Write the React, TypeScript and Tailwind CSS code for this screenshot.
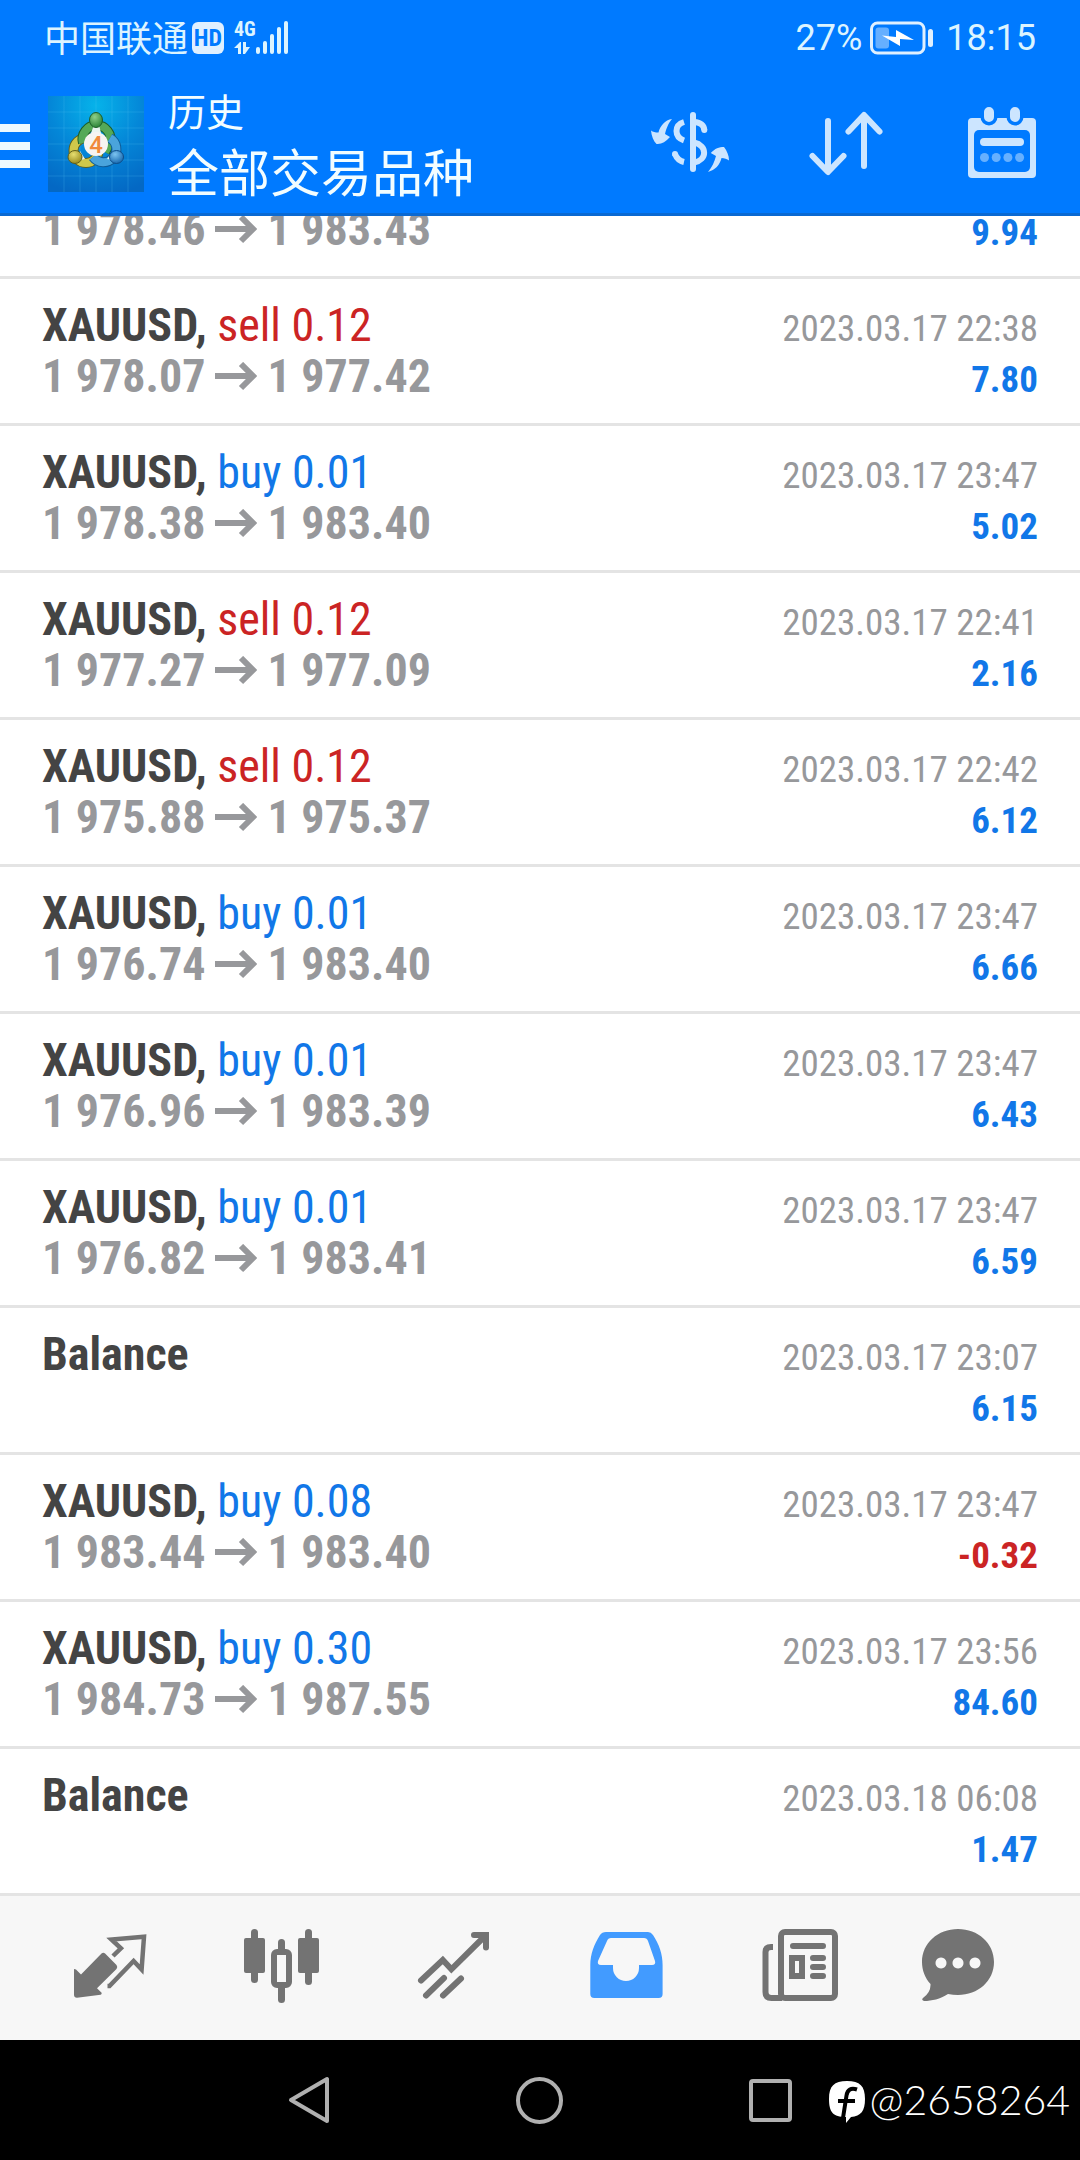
import type { ReactNode } from "react";

type Side = "buy" | "sell";

interface Deal {
  symbol?: string;
  side?: Side;
  volume?: string;
  open?: string;
  close?: string;
  time?: string;
  profit: string;
}

const DEALS: Deal[] = [
  // scrolled under the header, only its price line is left
  { open: "1 978.46", close: "1 983.43", profit: "9.94" },
  { symbol: "XAUUSD", side: "sell", volume: "0.12", open: "1 978.07", close: "1 977.42", time: "2023.03.17 22:38", profit: "7.80" },
  { symbol: "XAUUSD", side: "buy", volume: "0.01", open: "1 978.38", close: "1 983.40", time: "2023.03.17 23:47", profit: "5.02" },
  { symbol: "XAUUSD", side: "sell", volume: "0.12", open: "1 977.27", close: "1 977.09", time: "2023.03.17 22:41", profit: "2.16" },
  { symbol: "XAUUSD", side: "sell", volume: "0.12", open: "1 975.88", close: "1 975.37", time: "2023.03.17 22:42", profit: "6.12" },
  { symbol: "XAUUSD", side: "buy", volume: "0.01", open: "1 976.74", close: "1 983.40", time: "2023.03.17 23:47", profit: "6.66" },
  { symbol: "XAUUSD", side: "buy", volume: "0.01", open: "1 976.96", close: "1 983.39", time: "2023.03.17 23:47", profit: "6.43" },
  { symbol: "XAUUSD", side: "buy", volume: "0.01", open: "1 976.82", close: "1 983.41", time: "2023.03.17 23:47", profit: "6.59" },
  { symbol: "Balance", time: "2023.03.17 23:07", profit: "6.15" },
  { symbol: "XAUUSD", side: "buy", volume: "0.08", open: "1 983.44", close: "1 983.40", time: "2023.03.17 23:47", profit: "-0.32" },
  { symbol: "XAUUSD", side: "buy", volume: "0.30", open: "1 984.73", close: "1 987.55", time: "2023.03.17 23:56", profit: "84.60" },
  { symbol: "Balance", time: "2023.03.18 06:08", profit: "1.47" },
];

function StatusBar() {
  return (
    <div className="flex h-[71px] items-center justify-between px-11 pt-1 text-[36px] leading-[50px] text-[#dcf4ff]">
      <div className="flex items-center">
        <span className="pb-1 font-['Noto_Sans_CJK_SC',sans-serif]">中国联通</span>
        <span className="ml-1 flex size-8 items-center justify-center rounded-md bg-[#e0f0ff] font-['Roboto_Condensed','Roboto',sans-serif] text-[24px] font-bold text-[#007aff]">
          HD
        </span>
        <div className="ml-2.5 flex h-[33px] items-end">
          <div className="flex h-full flex-col justify-between">
            <span className="font-['Roboto_Condensed','Roboto',sans-serif] text-[20px] font-bold leading-4">4G</span>
            <svg viewBox="0 0 17 12" className="h-3 w-[17px]" fill="currentColor">
              <path d="M0 6 6 0h1v12H4V6zM9 0h3v5h4l-5 7H9z" />
            </svg>
          </div>
          <svg viewBox="0 0 36 33" className="h-[33px] w-9" fill="currentColor">
            <rect x="0" y="26" width="4" height="7" rx="2" />
            <rect x="7" y="20" width="4" height="13" rx="2" />
            <rect x="14" y="13" width="4" height="20" rx="2" />
            <rect x="21" y="6" width="4" height="27" rx="2" />
            <rect x="28" y="0" width="4" height="33" rx="2" />
          </svg>
        </div>
      </div>
      <div className="flex items-center font-['Roboto',sans-serif]">
        <span>27%</span>
        <svg viewBox="0 0 64 34" className="ml-2 h-[34px] w-16">
          <rect x="1.5" y="2" width="52.5" height="30" rx="6" fill="none" stroke="#e0f0ff" strokeWidth="3" />
          <rect x="5.5" y="6.5" width="13.5" height="21" rx="3" fill="#66afff" />
          <path d="M12 14.5 26 16V9l18 10-14-1v7z" fill="#fff" />
          <rect x="58" y="8" width="5" height="18" rx="2.5" fill="#e0f0ff" />
        </svg>
        <span className="ml-3">18:15</span>
      </div>
    </div>
  );
}

function AppLogo() {
  return (
    <svg viewBox="0 0 96 96" className="size-24">
      <defs>
        <radialGradient id="logo-bg" cx="0.5" cy="0.1" r="0.95">
          <stop offset="0" stopColor="#06b3ea" />
          <stop offset="0.5" stopColor="#0487d8" />
          <stop offset="1" stopColor="#0468c4" />
        </radialGradient>
        <radialGradient id="logo-green" cx="0.4" cy="0.3" r="0.8">
          <stop offset="0" stopColor="#8fd08a" />
          <stop offset="1" stopColor="#207a2c" />
        </radialGradient>
        <radialGradient id="logo-yellow" cx="0.4" cy="0.3" r="0.8">
          <stop offset="0" stopColor="#e6de70" />
          <stop offset="1" stopColor="#8f8114" />
        </radialGradient>
        <radialGradient id="logo-blue" cx="0.4" cy="0.3" r="0.8">
          <stop offset="0" stopColor="#7cc4f0" />
          <stop offset="1" stopColor="#0b5ea8" />
        </radialGradient>
      </defs>
      <rect width="96" height="96" fill="url(#logo-bg)" />
      <path
        d="M16 0v96M32 0v96M48 0v96M64 0v96M80 0v96M0 16h96M0 32h96M0 48h96M0 64h96M0 80h96"
        stroke="#5cc8f5"
        strokeOpacity="0.22"
      />
      <g fill="none">
        <circle cx="38" cy="54.5" r="12.5" stroke="#5f5f1c" strokeWidth="10" />
        <circle cx="38" cy="54.5" r="12.5" stroke="#cfc84a" strokeWidth="8" />
        <path d="M35 47a14 14 0 1 1 27 0l-5 9" stroke="#1d5e2a" strokeWidth="10" />
        <path d="M35 47a14 14 0 1 1 27 0l-5 9" stroke="#55a957" strokeWidth="8" />
        <path d="M62 42a13 13 0 1 1-17 19" stroke="#0e5c98" strokeWidth="10" />
        <path d="M62 42a13 13 0 1 1-17 19" stroke="#4aa4dc" strokeWidth="8" />
      </g>
      <path d="M43 37h10l-2-8h-5zM32 55l5 8-6 1zM65 55l-6 8 7 1z" fill="#eaf5f0" />
      <ellipse cx="48" cy="24" rx="6.5" ry="7.5" fill="url(#logo-green)" stroke="#1d5e2a" />
      <ellipse cx="27" cy="61" rx="7" ry="6.5" fill="url(#logo-yellow)" stroke="#5f5f1c" />
      <ellipse cx="68.5" cy="61" rx="7" ry="6.5" fill="url(#logo-blue)" stroke="#0e4c88" />
      <circle cx="48" cy="48" r="12" fill="#f6f4f2" />
      <text x="48" y="57" textAnchor="middle" className="fill-[#f08a3c] font-['Roboto',sans-serif] text-[24px] font-medium">
        4
      </text>
    </svg>
  );
}

function HeaderButton({ label, children }: { label: string; children: ReactNode }) {
  return (
    <button type="button" aria-label={label} className="flex w-[156px] items-center justify-center text-[#cce5ff]">
      <svg viewBox="0 0 96 96" className="size-24" fill="none" stroke="currentColor" strokeWidth="6">
        {children}
      </svg>
    </button>
  );
}

function Header() {
  return (
    <header className="relative z-10 border-b-[3px] border-[#0a69d2] bg-[#007aff]">
      <StatusBar />
      <div className="flex h-[142px] items-stretch">
        <button type="button" aria-label="Menu" className="flex w-[30px] flex-col justify-center gap-2.5 pt-2">
          <span className="h-2 w-full bg-[#eef9ff]" />
          <span className="h-2 w-full bg-[#eef9ff]" />
          <span className="h-2 w-full bg-[#eef9ff]" />
        </button>
        <div className="ml-[18px] flex items-center pt-1">
          <AppLogo />
        </div>
        <div className="ml-6 flex flex-1 flex-col justify-center pb-1 font-['Noto_Sans_CJK_SC',sans-serif] text-[#f2fdff]">
          <span className="text-[38px] leading-[60px]">历史</span>
          <h1 className="text-[51px] leading-[60px]">全部交易品种</h1>
        </div>
        <HeaderButton label="Symbols">
          <path d="M51 21v54" strokeLinecap="round" />
          <path d="M42 28C32 31 32 43 42 46.500" />
          <path d="M52 28c7 .5 10 3.500 10.300 8M33 60c1.500 4 4.500 7 9 8" />
          <path d="M52 48.500c13.500 3 13.500 17.500 0 20" />
          <circle cx="62.3" cy="36" r="3" fill="currentColor" stroke="none" />
          <circle cx="33" cy="60" r="3" fill="currentColor" stroke="none" />
          <g fill="currentColor" stroke="none">
            <path d="M30 25C23 26 18 32 16.500 38.500 13 38.500 11 38 9 36.500c.5 5.500 2.500 10.500 5.500 13.500 5 .5 9-2 13.500-7l-5-3c1.500-6 3-10 7-15z" />
            <path d="M66 78c7-2 12-7 13.500-14 3 0 5.500 1 7.500 2.500 0-5-2-9.500-5-13.500-5 0-9 1.500-13.200 6l5.200 3c-1.500 6-4 11-8 16z" />
          </g>
        </HeaderButton>
        <HeaderButton label="Sort">
          <g strokeLinecap="round" strokeLinejoin="round">
            <path d="M30 27v50M14.500 62 30 78l15.500-16" />
            <path d="M66 72V22M50.500 37.500 66 21l15.500 16.500" />
          </g>
        </HeaderButton>
        <HeaderButton label="Period">
          <rect x="14" y="24" width="68" height="60" rx="4" fill="currentColor" stroke="none" />
          <rect x="20" y="36" width="56" height="42" rx="5" fill="#007aff" stroke="none" />
          <path d="M35 18v5M61 18v5" stroke="#007aff" strokeWidth="17" strokeLinecap="round" />
          <path d="M35 18v5M61 18v5" strokeWidth="10" strokeLinecap="round" />
          <path d="M30 48h36" strokeWidth="8" strokeLinecap="round" />
          <g fill="#66b0ff" stroke="none">
            <circle cx="30.5" cy="63.5" r="4.5" />
            <circle cx="42.2" cy="63.5" r="4.5" />
            <circle cx="53.9" cy="63.5" r="4.5" />
            <circle cx="65.6" cy="63.5" r="4.5" />
          </g>
        </HeaderButton>
      </div>
    </header>
  );
}

function DealRow({ deal }: { deal: Deal }) {
  const loss = deal.profit.startsWith("-");
  return (
    <li className="border-b-[3px] border-[#e4e4e4] px-[42px] py-[21px] leading-[51px] first:pt-0">
      {deal.symbol && (
        <div className="flex h-[51px] items-baseline justify-between">
          <p className="text-[46px]">
            <span className="font-bold text-[#444]">
              {deal.symbol}
              {deal.side && ","}
            </span>
            {deal.side && (
              <span className={deal.side === "buy" ? "text-[#1177e8]" : "text-[#cb2424]"}>
                {" "}
                {deal.side} {deal.volume}
              </span>
            )}
          </p>
          <time className="text-[37px] text-[#97989b]">{deal.time}</time>
        </div>
      )}
      <div className="flex h-[51px] items-baseline justify-between">
        <p className="flex items-baseline gap-2.5 text-[46px] font-bold text-[#97989b]">
          {deal.open ? (
            <>
              <span>{deal.open}</span>
              <svg viewBox="0 0 42 30" className="h-[30px] w-[42px]" fill="none" stroke="currentColor" strokeWidth="6">
                <path d="M0 14h38M26 2l12 12-12 12" />
              </svg>
              <span>{deal.close}</span>
            </>
          ) : (
            // keeps the profit on the same baseline as in the other rows
            <span>&nbsp;</span>
          )}
        </p>
        <span className={`text-[37px] font-bold ${loss ? "text-[#cb2424]" : "text-[#1177e8]"}`}>{deal.profit}</span>
      </div>
    </li>
  );
}

function Tab({ label, active, children }: { label: string; active?: boolean; children: ReactNode }) {
  return (
    <button
      type="button"
      aria-label={label}
      className={`flex flex-1 items-center justify-center ${active ? "text-[#429bff]" : "text-[#737373]"}`}
    >
      <svg viewBox="0 0 96 96" className="size-24" fill="currentColor">
        {children}
      </svg>
    </button>
  );
}

function TabBar() {
  return (
    <nav className="flex h-36 bg-[#f7f7f7] px-6">
      <Tab label="Quotes">
        <path d="M39.500 33.500q1.800-1.500 3.600 0L54.500 45q1.500 2 0 4L35 68.300l4.600 4.500q.5 1.500-1 2L15 77.800q-3 0-3-3V49l2 .5 5 5z" />
        <path
          d="M45.500 66h2L71.600 41l8 8.500L82 16.800 49.500 19.500l9.400 8.800L51 36"
          fill="none"
          stroke="currentColor"
          strokeWidth="4.5"
        />
      </Tab>
      <Tab label="Charts">
        <rect x="10" y="18" width="21" height="35" rx="2" />
        <rect x="17" y="9" width="7" height="54" rx="3.5" />
        <rect x="64" y="18" width="21" height="35" rx="2" />
        <rect x="71" y="9" width="7" height="56" rx="3.5" />
        <rect x="44" y="19" width="7" height="16" rx="3.5" />
        <rect x="44" y="62" width="7" height="21" rx="3.5" />
        <rect x="40" y="32" width="15" height="33" rx="3" fill="none" stroke="currentColor" strokeWidth="6" />
      </Tab>
      <Tab label="Trade">
        <g fill="none" stroke="currentColor" strokeWidth="6" strokeLinecap="round">
          <path d="M15 60.500 36.800 40l8.600 9.300L79 16M68 15h12v12.500" />
          <path d="M20 75.500 38 58M37 75.500 55 58.500" />
        </g>
      </Tab>
      <Tab label="History" active>
        <path
          fillRule="evenodd"
          d="M28 12h42q3 0 5 3c6 9 9.600 19 9.600 30v29q0 4-4 4H16.300q-4 0-4-4V45c0-11 4-21 9.700-30q2-3 6-3zm5 6q-3 0-4 3l-9 20q-1 4 3 4h12v3a13 13 0 0 0 26 0v-3h13q4 0 3-4l-7-20q-1-3-4-3z"
        />
      </Tab>
      <Tab label="News">
        <g fill="none" stroke="currentColor" strokeWidth="6">
          <rect x="31" y="12" width="54" height="66" rx="4" />
          <path d="M23 27h-2q-5.500 0-5.500 5v40q0 6 6 6H32" />
          <rect x="42" y="38" width="10" height="18" />
          <path d="M43 26h30M63 38h10M63 47h10M63 56h10" strokeLinecap="round" />
        </g>
      </Tab>
      <Tab label="Messages">
        <path
          fillRule="evenodd"
          d="M36 9c20 0 36 14 36 33S56 75 36 75q-5 0-10-1c-8 5-16 7-24 7q-3-1-1-3 8-6 7.500-14C3 58 0 50 0 42 0 23 16 9 36 9zM19 37.500a5.500 5.500 0 1 0 .01 0zM36 37.500a5.500 5.500 0 1 0 .01 0zM53 37.500a5.500 5.500 0 1 0 .01 0z"
        />
      </Tab>
    </nav>
  );
}

function SystemNav() {
  return (
    <footer className="relative h-[120px] bg-black">
      <div className="mx-auto grid h-full w-[64%] grid-cols-3 text-[#b0b0b0]">
        <button type="button" aria-label="Back" className="flex items-center justify-center">
          <svg viewBox="0 0 48 48" className="size-12" fill="none" stroke="currentColor" strokeWidth="4" strokeLinejoin="round">
            <path d="M5 24 41 3v42z" />
          </svg>
        </button>
        <button type="button" aria-label="Home" className="flex items-center justify-center">
          <span className="size-[47px] rounded-full border-4 border-current" />
        </button>
        <button type="button" aria-label="Recent apps" className="flex items-center justify-center">
          <span className="size-[43px] rounded border-4 border-current" />
        </button>
      </div>
      <div className="absolute inset-y-0 right-[10px] flex items-center gap-1 text-white">
        <svg viewBox="0 0 38 44" className="mt-1 h-11 w-[38px]">
          <path d="M19 1C32 1 37 6 37 19c0 12-4 17-14 18l-5 6v-6C5 37 1 32 1 19 1 6 6 1 19 1z" fill="#fff" />
          <path d="M29 9.500c-6-2-9.500 0-10.500 6L15 38M10 21h17" fill="none" stroke="#000" strokeWidth="4" />
        </svg>
        <span className="font-['Lato',sans-serif] text-[41px] font-light leading-[60px]">@2658264</span>
      </div>
    </footer>
  );
}

export default function App() {
  return (
    <div className="flex min-h-screen flex-col bg-white font-['Roboto_Condensed','Roboto',sans-serif]">
      <Header />
      <main className="flex-1">
        <ul className="-mt-3">
          {DEALS.map((deal, i) => (
            <DealRow key={i} deal={deal} />
          ))}
        </ul>
      </main>
      <TabBar />
      <SystemNav />
    </div>
  );
}
